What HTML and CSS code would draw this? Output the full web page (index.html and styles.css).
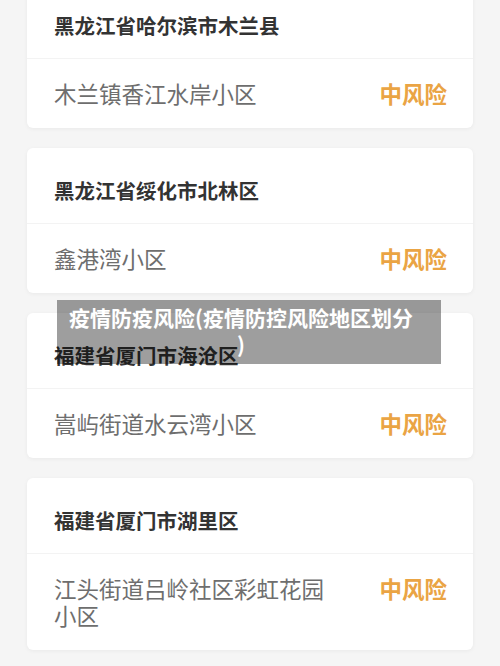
FILE: index.html
```html
<!DOCTYPE html>
<html>
    <head>
        <title>疫情防疫风险</title>
        <link rel="stylesheet" href="styles.css">
    </head>
    <body>
        <div class="list">
            <div class="card">
                <div class="area">黑龙江省哈尔滨市木兰县</div>
                <div class="row">
                    <span class="place">木兰镇香江水岸小区</span>
                    <span class="risk">中风险</span>
                </div>
            </div>
            <div class="card">
                <div class="area">黑龙江省绥化市北林区</div>
                <div class="row">
                    <span class="place">鑫港湾小区</span>
                    <span class="risk">中风险</span>
                </div>
            </div>
            <div class="card">
                <div class="area">福建省厦门市海沧区</div>
                <div class="row">
                    <span class="place">嵩屿街道水云湾小区</span>
                    <span class="risk">中风险</span>
                </div>
            </div>
            <div class="card">
                <div class="area">福建省厦门市湖里区</div>
                <div class="row">
                    <span class="place">江头街道吕岭社区彩虹花园小区</span>
                    <span class="risk">中风险</span>
                </div>
            </div>
        </div>
        <div class="caption">疫情防疫风险(疫情防控风险地区划分)</div>
    </body>
</html>
```

FILE: styles.css
```css
* {
    margin: 0;
    padding: 0;
    box-sizing: border-box;
}

body {
    width: 500px;
    height: 666px;
    overflow: hidden;
    background: #f5f5f5;
    font-family: "Noto Sans CJK SC", "Noto Sans", sans-serif;
}

.list {
    display: flex;
    flex-direction: column;
    gap: 20px;
    padding: 0 27px;
    margin-top: -17px;
}

.card {
    background: #fff;
    border-radius: 6px;
    box-shadow: 0 1px 4px rgba(0, 0, 0, 0.05);
}

.area {
    padding: 28px 27px 19px;
    font-size: 20.5px;
    line-height: 28px;
    font-weight: 700;
    color: #333;
    border-bottom: 1px solid #f3f3f3;
}

.row {
    display: flex;
    justify-content: space-between;
    align-items: flex-start;
    padding: 21px 26px 21px 27px;
}

.place {
    max-width: 280px;
    font-size: 22.5px;
    line-height: 27px;
    color: #6e6e6e;
}

.risk {
    font-size: 22.5px;
    line-height: 27px;
    font-weight: 700;
    color: #eaa444;
}

.caption {
    position: absolute;
    left: 57px;
    top: 300px;
    width: 384px;
    height: 64px;
    padding: 4px 26px 0 10px;
    background: rgba(0, 0, 0, 0.38);
    color: #fff;
    font-size: 21px;
    line-height: 27px;
    font-weight: 700;
    text-align: center;
    line-break: anywhere;
}
```
